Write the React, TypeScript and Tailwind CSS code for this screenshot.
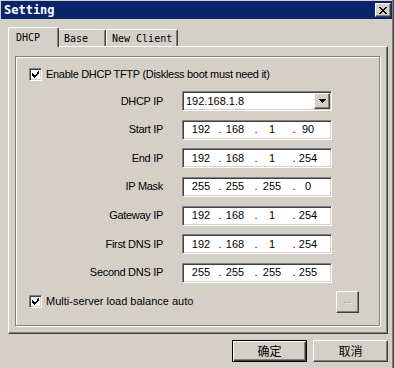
import React from "react";

const raised =
  "border border-t-white border-l-white border-r-[#404040] border-b-[#404040] shadow-[inset_-1px_-1px_0_#808080]";
const sunken =
  "border border-t-[#808080] border-l-[#808080] border-r-white border-b-white shadow-[inset_1px_1px_0_#404040,inset_-1px_-1px_0_#d4d0c8]";

const mono = { fontFamily: "'DejaVu Sans Mono', 'Liberation Mono', monospace" };
const cjk = { fontFamily: "'Noto Sans CJK SC', 'Liberation Sans', sans-serif" };

function Check() {
  return (
    <div className={`w-[13px] h-[13px] bg-white flex items-center justify-center ${sunken}`}>
      <svg width="7" height="7" viewBox="0 0 7 7" shapeRendering="crispEdges">
        <path d="M0 2h1v1h-1zM0 3h2v1h-2zM0 4h3v1h-3zM1 5h3v1h-3zM2 6h1v1h-1zM3 4h2v1h-2zM4 3h2v1h-2zM5 2h2v1h-2zM6 0h1v2h-1zM5 1h2v1h-2zM3 4h1v2h-1z" fill="#000" />
      </svg>
    </div>
  );
}

function Cell({ ml, children }: { ml: string; children: React.ReactNode }) {
  return <div className={`w-0 flex justify-center whitespace-nowrap ${ml}`}>{children}</div>;
}

function IpField({ parts }: { parts: string[] }) {
  return (
    <div className={`w-[150px] h-[20px] bg-white flex items-center ${sunken}`}>
      <div className="flex items-center pl-px">
        <Cell ml="ml-[17px]">{parts[0]}</Cell>
        <Cell ml="ml-[19px]">.</Cell>
        <Cell ml="ml-[15px]">{parts[1]}</Cell>
        <Cell ml="ml-[21px]">.</Cell>
        <Cell ml="ml-[16px]">{parts[2]}</Cell>
        <Cell ml="ml-[22px]">.</Cell>
        <Cell ml="ml-[14px]">{parts[3]}</Cell>
      </div>
    </div>
  );
}

function Row({ label, children }: { label: string; children: React.ReactNode }) {
  return (
    <div className="flex items-center h-[20px]">
      <div className="w-[147px] text-right whitespace-nowrap tracking-[-0.3px]">{label}</div>
      <div className="ml-[19px]">{children}</div>
    </div>
  );
}

export default function App() {
  return (
    <div
      className="w-[394px] h-[368px] bg-[#d4d0c8] overflow-hidden flex flex-col pl-px pt-px border-r border-r-[#404040] shadow-[inset_-1px_0_0_#808080] text-[11px] text-black leading-none"
      style={{ fontFamily: "'Liberation Sans', Arial, sans-serif" }}
    >
      {/* Title bar */}
      <div className="h-[18px] mr-px bg-[#0a246a] flex items-center justify-between pl-[3px] pr-[1px]">
        <span className="text-white font-bold text-[12px]" style={mono}>
          Setting
        </span>
        <div className={`w-[16px] h-[14px] bg-[#d4d0c8] flex items-center justify-center ${raised}`}>
          <svg width="8" height="7" viewBox="0 0 8 7" shapeRendering="crispEdges">
            <path d="M0 0h2v1h-2zM6 0h2v1h-2zM1 1h2v1h-2zM5 1h2v1h-2zM2 2h4v1h-4zM3 3h2v1h-2zM2 4h4v1h-4zM1 5h2v1h-2zM5 5h2v1h-2zM0 6h2v1h-2zM6 6h2v1h-2z" fill="#000" />
          </svg>
        </div>
      </div>

      <div className="pl-[7px] mt-[8px] flex flex-col">
        {/* Tabs */}
        <div className="h-[19px] flex items-end">
          <div className="relative z-10 -mb-px w-[51px] h-[20px] bg-[#d4d0c8] border-l border-t border-l-white border-t-white border-r border-r-[#404040] shadow-[inset_-1px_0_0_#808080] rounded-tl-[2px] rounded-tr-[2px] pl-[7px] pt-[5px] text-[10px]" style={mono}>
            DHCP
          </div>
          <div className="w-[47px] h-[17px] border-t border-t-white border-r border-r-[#404040] shadow-[inset_-1px_0_0_#808080] rounded-tr-[2px] pl-[5px] pt-[4px] text-[10px]" style={mono}>
            Base
          </div>
          <div className="w-[72px] h-[17px] border-l border-l-white border-t border-t-white border-r border-r-[#404040] shadow-[inset_-1px_0_0_#808080] rounded-tl-[2px] rounded-tr-[2px] pl-[5px] pt-[4px] text-[10px]" style={mono}>
            New Client
          </div>
        </div>

        {/* Panel */}
        <div className="w-[380px] h-[288px] border border-t-white border-l-white border-r-[#404040] border-b-[#404040] shadow-[inset_-1px_-1px_0_#808080] pl-[6px] pt-[9px]">
          <div className="w-[365px] h-[270px] border border-[#808080] shadow-[inset_1px_1px_0_#fff,1px_1px_0_#fff] flex flex-col">
            <div className="flex items-center pl-[13px] mt-[11px] h-[13px]">
              <Check />
              <span className="ml-[4px] whitespace-nowrap tracking-[-0.3px]">Enable DHCP TFTP (Diskless boot must need it)</span>
            </div>

            <div className="flex flex-col gap-[8.67px] mt-[10px]">
              <Row label="DHCP IP">
                <div className={`w-[150px] h-[20px] bg-white flex items-center justify-between ${sunken}`}>
                  <span className="pl-[3px]">192.168.1.8</span>
                  <div className={`w-[16px] h-[16px] mr-px bg-[#d4d0c8] flex items-center justify-center ${raised}`}>
                    <svg width="7" height="4" viewBox="0 0 7 4" shapeRendering="crispEdges">
                      <path d="M0 0h7v1h-7zM1 1h5v1h-5zM2 2h3v1h-3zM3 3h1v1h-1z" fill="#000" />
                    </svg>
                  </div>
                </div>
              </Row>
              <Row label="Start IP">
                <IpField parts={["192", "168", "1", "90"]} />
              </Row>
              <Row label="End IP">
                <IpField parts={["192", "168", "1", "254"]} />
              </Row>
              <Row label="IP Mask">
                <IpField parts={["255", "255", "255", "0"]} />
              </Row>
              <Row label="Gateway IP">
                <IpField parts={["192", "168", "1", "254"]} />
              </Row>
              <Row label="First DNS IP">
                <IpField parts={["192", "168", "1", "254"]} />
              </Row>
              <Row label="Second DNS IP">
                <IpField parts={["255", "255", "255", "255"]} />
              </Row>
            </div>

            <div className="flex items-center justify-between h-[22px] mt-[8px] pl-[13px] pr-[20px]">
              <div className="flex items-center">
                <Check />
                <span className="ml-[4px] whitespace-nowrap">Multi-server load balance auto</span>
              </div>
              <div className={`w-[23px] h-[22px] bg-[#d4d0c8] flex items-center justify-center text-[#808080] ${raised}`}>
                <span className="text-[9px] -mt-[2px] [text-shadow:1px_1px_0_#fff]">...</span>
              </div>
            </div>
          </div>
        </div>

        {/* Buttons */}
        <div className="w-[380px] flex justify-end gap-[6px] mt-[6px]">
          <div className="w-[75px] h-[22px] border border-black shadow-[inset_1px_1px_0_#fff,inset_-1px_-1px_0_#404040,inset_-2px_-2px_0_#808080] flex items-center justify-center text-[12px]" style={cjk}>
            确定
          </div>
          <div className={`w-[75px] h-[22px] flex items-center justify-center text-[12px] ${raised}`} style={cjk}>
            取消
          </div>
        </div>
      </div>
    </div>
  );
}
